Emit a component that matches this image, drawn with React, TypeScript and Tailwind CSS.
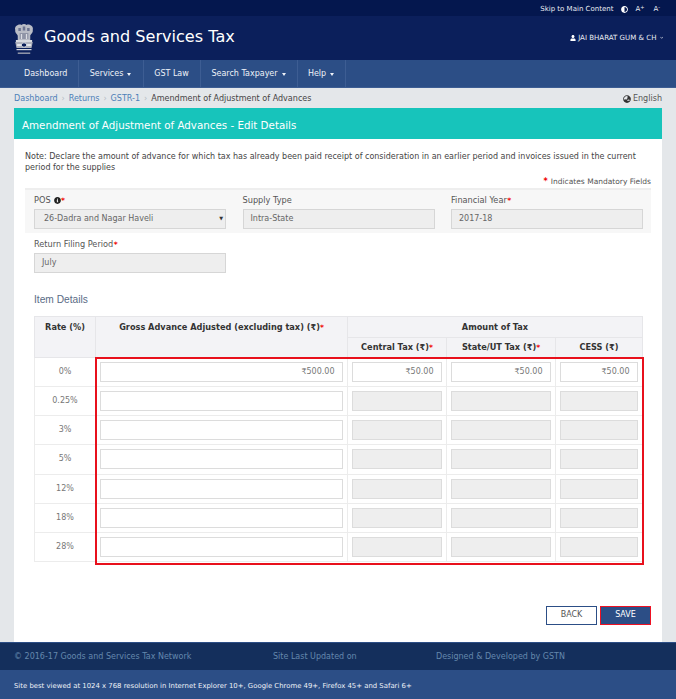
import React from "react";
import { FaUser, FaAdjust, FaGlobeAsia, FaInfoCircle, FaChevronDown } from "react-icons/fa";

const Req = () => <span className="text-[#f00000] font-bold align-[0px] text-[7.5px] leading-none">*</span>;

const Emblem = () => (
  <svg width="20" height="33" viewBox="2 0 16 33" preserveAspectRatio="none" fill="none">
    <path d="M3 7 C2 3 6 0.5 8 2 C9 0.5 11 0.5 12 2 C14 0.5 18 3 17 7 C17.5 10 15 11 15 13 L15 17 L5 17 L5 13 C5 11 2.5 10 3 7Z" fill="#b9bcc6" />
    <path d="M5.5 5h2v3h-2zM9 3.5h2v4H9zM12.5 5h2v3h-2z" fill="#6c7390" />
    <path d="M6.5 10h7v6h-7z" fill="#8f94a6" />
    <path d="M7.5 11h1v5h-1zM11.5 11h1v5h-1z" fill="#dcdee4" />
    <path d="M3.5 17h13v2h-13z" fill="#d8dae0" />
    <path d="M3 19h14l-1 6H4z" fill="#aeb1bc" />
    <circle cx="10" cy="22" r="2.2" fill="#0b1e59" stroke="#e4e6ec" strokeWidth="0.8" />
    <path d="M4.5 21h3v2h-3zM12.5 21h3v2h-3z" fill="#e4e6ec" />
    <path d="M4 26h12v1.2H4z" fill="#d8dae0" />
    <path d="M5 29.5h10v1.4H5z" fill="#9da1b0" />
  </svg>
);

const NavItem = ({ label, w, caret }: { label: string; w: string; caret?: boolean }) => (
  <div className={`${w} h-full pt-[1px] flex items-center justify-center border-r border-[#3d5d93] text-[#eef2f8] text-[8px] font-medium`}>
    {label}
    {caret && <span className="ml-[4px] w-0 h-0 border-x-[2.5px] border-x-transparent border-t-[3px] border-t-[#eef2f8]" />}
  </div>
);

const Crumb = ({ label }: { label: string }) => (
  <>
    <span className="text-[#4c7fb8]">{label}</span>
    <span className="text-[#b6bcc4] w-[11px] text-center text-[8px]">›</span>
  </>
);

const Field = ({ label, value, req, info, select, className }: { label: string; value: string; req?: boolean; info?: boolean; select?: boolean; className?: string }) => (
  <div className={`w-[192px] ${className ?? ""}`}>
    <div className="h-[16px] pb-[1px] flex items-center text-[#555] text-[8.2px] leading-none">
      {label}
      {info && <FaInfoCircle className="ml-[3px] text-[7px] text-[#222]" />}
      {req && <span className="ml-[0.5px] mt-[-1px]"><Req /></span>}
    </div>
    <div className={`h-[20px] bg-[#eeeeee] border border-[#d6d6d6] flex items-center justify-between text-[#666] text-[8px] pr-[2px] ${select ? "pl-[9px]" : "pl-[7px]"}`}>
      <span>{value}</span>
      {select && <span className="text-[5px] text-[#333]">▼</span>}
    </div>
  </div>
);

const rows = ["0%", "0.25%", "3%", "5%", "12%", "18%", "28%"];

const Th = ({ children, rowSpan, colSpan, className }: { children: React.ReactNode; rowSpan?: number; colSpan?: number; className?: string }) => (
  <th rowSpan={rowSpan} colSpan={colSpan} className={`border border-[#e6e6e9] bg-[#f3f3f6] text-[#333] text-[8.2px] font-bold p-0 ${className ?? ""}`}>
    {children}
  </th>
);

const Cell = ({ value, disabled }: { value?: string; disabled?: boolean }) => (
  <td className="border border-[#ececec] p-0 pl-[4px] pr-[4.5px]">
    <div className={`h-[20px] border border-[#dcdcdc] flex items-center justify-end pr-[7px] text-[#777] text-[8px] ${disabled ? "bg-[#eeeeee]" : "bg-white"}`}>
      {value}
    </div>
  </td>
);

export default function App() {
  return (
    <div className="w-[676px] h-[699px] overflow-hidden flex flex-col bg-[#e4e7ea] font-['DejaVu_Sans',sans-serif]">
      <div className="h-[16px] pt-[3px] bg-[#04174e] flex items-center justify-end pr-[16px] text-[#e8ebf2] text-[7px]">
        <span className="font-medium">Skip to Main Content</span>
        <FaAdjust className="ml-[8px] text-[7px] text-white" />
        <span className="ml-[7px] font-medium">A<sup className="text-[5px]">+</sup></span>
        <span className="ml-[9px] font-medium">A<sup className="text-[5px]">-</sup></span>
      </div>
      <div className="h-[44px] bg-[#0b1f5b] flex items-center pl-[13.5px] pr-[13px]">
        <div className="pt-[2px]"><Emblem /></div>
        <div className="ml-[10.5px] text-white text-[16.1px] leading-none mb-[1px]">Goods and Services Tax</div>
        <div className="ml-auto flex items-center text-[#e8ebf2] text-[7.05px] font-medium">
          <FaUser className="text-[6px] mr-[2px] text-white" />
          JAI BHARAT GUM &amp; CH
          <FaChevronDown className="text-[3.5px] ml-[3px]" />
        </div>
      </div>
      <div className="h-[28px] bg-[#2c4e86] flex pl-[14px] border-b border-[#3d5d93]">
        <NavItem label="Dashboard" w="w-[64.5px]" />
        <NavItem label="Services" w="w-[65px]" caret />
        <NavItem label="GST Law" w="w-[57px]" />
        <NavItem label="Search Taxpayer" w="w-[97px]" caret />
        <NavItem label="Help" w="w-[48px]" caret />
      </div>
      <div className="h-[20px] pt-[2px] flex items-center justify-between px-[14px] text-[8.05px] text-[#444]">
        <div className="flex items-center">
          <Crumb label="Dashboard" />
          <Crumb label="Returns" />
          <Crumb label="GSTR-1" />
          <span>Amendment of Adjustment of Advances</span>
        </div>
        <div className="flex items-center text-[#555]">
          <FaGlobeAsia className="text-[8px] mr-[2px] text-[#333]" />English
        </div>
      </div>
      <div className="mx-[14px] flex-1 bg-white flex flex-col relative">
        <div className="h-[31px] bg-[#17c4bb] flex items-center pl-[8px] pt-[4px] text-white text-[10.3px] shrink-0">
          Amendment of Adjustment of Advances - Edit Details
        </div>
        <div className="pl-[11px] pr-[11px]">
          <p className="mt-[13px] text-[#444] text-[8px] leading-[10.5px]">
            Note: Declare the amount of advance for which tax has already been paid receipt of consideration in an earlier period and invoices issued in the current period for the supplies
          </p>
          <div className="mt-[3px] h-[11px] flex items-center justify-end text-[#555] text-[7.5px]">
            <span className="text-[#f00000] text-[8px] font-bold mr-[3px]">*</span>Indicates Mandatory Fields
          </div>
          <div className="mt-[1px] h-[45px] bg-[#f7f7f7] border-t-2 border-[#eeeeee] flex pl-[9px] pt-[3px] gap-[16.5px]">
            <Field label="POS" value="26-Dadra and Nagar Haveli" req info select />
            <Field label="Supply Type" value="Intra-State" />
            <Field label="Financial Year" value="2017-18" req />
          </div>
          <div className="pl-[9px] mt-[4px]">
            <Field label="Return Filing Period" value="July" req />
          </div>
          <div className="pl-[9px] mt-[21px] h-[12px] flex items-center text-[#5a6b85] text-[10.2px] font-['Liberation_Sans',sans-serif]">
            Item Details
          </div>
          <div className="pl-[9px] mt-[10px]">
            <table className="table-fixed border-collapse w-[608px]">
              <colgroup>
                <col className="w-[61px]" />
                <col className="w-[252px]" />
                <col className="w-[99px]" />
                <col className="w-[109px]" />
                <col className="w-[87px]" />
              </colgroup>
              <thead>
                <tr className="h-[21px]">
                  <Th rowSpan={2} className="align-top pt-[4px]">Rate (%)</Th>
                  <Th rowSpan={2} className="align-top pt-[4px]">Gross Advance Adjusted (excluding tax) (₹)<Req /></Th>
                  <Th colSpan={3}>Amount of Tax</Th>
                </tr>
                <tr className="h-[20px]">
                  <Th>Central Tax (₹)<Req /></Th>
                  <Th>State/UT Tax (₹)<Req /></Th>
                  <Th>CESS (₹)</Th>
                </tr>
              </thead>
              <tbody>
                {rows.map((r, i) => (
                  <tr key={r} className="h-[29.14px]">
                    <td className="border border-[#ececec] text-center text-[#777] text-[8px] p-0">{r}</td>
                    <Cell value={i === 0 ? "₹500.00" : undefined} />
                    <Cell value={i === 0 ? "₹50.00" : undefined} disabled={i !== 0} />
                    <Cell value={i === 0 ? "₹50.00" : undefined} disabled={i !== 0} />
                    <Cell value={i === 0 ? "₹50.00" : undefined} disabled={i !== 0} />
                  </tr>
                ))}
              </tbody>
            </table>
          </div>
          <div className="mt-[44px] flex justify-end gap-[3px]">
            <button className="w-[51px] h-[19px] bg-white border border-[#2c4e86] text-[#555] text-[8px] flex items-center justify-center">BACK</button>
            <button className="w-[51px] h-[19px] bg-[#2c4e86] border-[1.5px] border-[#ee1122] text-white text-[8px] flex items-center justify-center">SAVE</button>
          </div>
        </div>
        <div className="absolute left-[81px] top-[249px] w-[549px] h-[208px] border-2 border-[#e8101c] pointer-events-none" />
      </div>
      <div className="h-[28px] bg-[#142f5c] border-t border-[#2c4e86] flex items-center px-[14px] text-[#6488ad] text-[8px] relative">
        <span className="w-[259px]">© 2016-17 Goods and Services Tax Network</span>
        <span className="w-[163px]">Site Last Updated on</span>
        <span>Designed &amp; Developed by GSTN</span>
      </div>
      <div className="h-[29px] pt-[3px] bg-[#2c4e86] flex items-center px-[14px] text-[#eef2f8] text-[6.9px]">
        Site best viewed at 1024 x 768 resolution in Internet Explorer 10+, Google Chrome 49+, Firefox 45+ and Safari 6+
      </div>
    </div>
  );
}
